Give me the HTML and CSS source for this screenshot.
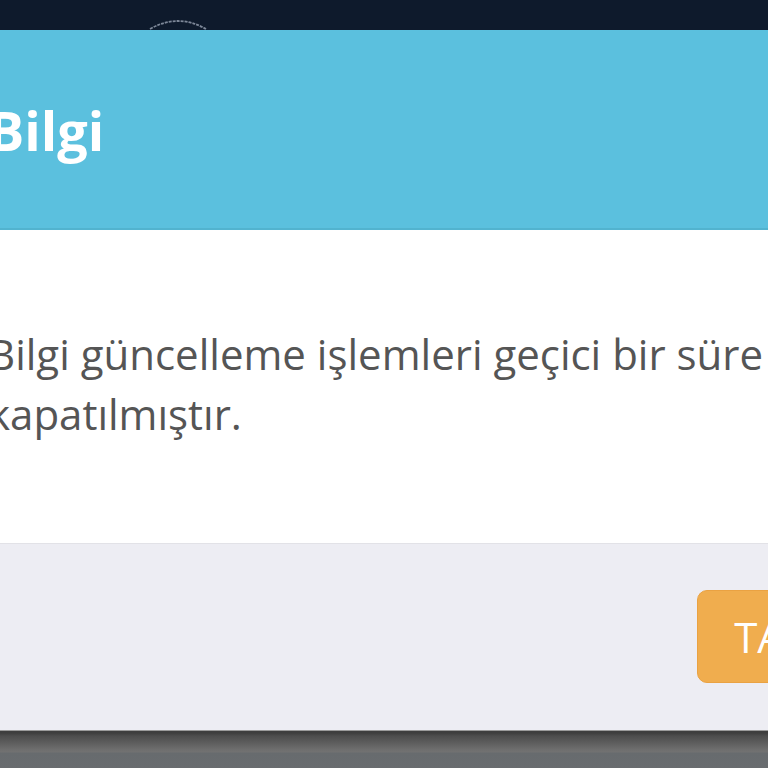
FILE: index.html
```html
<!DOCTYPE html>
<html lang="tr">
<head>
<meta charset="utf-8">
<title>Bilgi</title>
<link rel="stylesheet" href="styles.css">
</head>
<body>
<div class="page">
  <div class="topbar">
    <svg class="logo-arc" width="64" height="14" viewBox="0 0 64 14">
      <path d="M4 13 Q32 -3 60 13" fill="none" stroke="#7d8798" stroke-width="1.8" stroke-dasharray="3 1"/>
    </svg>
  </div>
  <div class="modal">
    <div class="modal-header">
      <h4 class="modal-title">Bilgi</h4>
    </div>
    <div class="modal-body">
      <p class="message">Bilgi güncelleme işlemleri geçici bir süre kapatılmıştır.</p>
    </div>
    <div class="modal-footer">
      <button class="btn-warning" type="button">TAMAM</button>
    </div>
  </div>
  <div class="bottombar"></div>
</div>
</body>
</html>
```

FILE: styles.css
```css
html, body {
  margin: 0;
  padding: 0;
  background: #0d1829;
}
.page {
  width: 768px;
  height: 768px;
  overflow: hidden;
  display: flex;
  flex-direction: column;
  font-family: "Open Sans", "Liberation Sans", sans-serif;
}
.topbar {
  height: 30px;
  flex: 0 0 30px;
  background: #0e1a2c;
  display: flex;
  align-items: flex-end;
  padding-left: 146px;
  box-sizing: border-box;
}
.logo-arc {
  display: block;
}
.modal {
  flex: 0 0 700px;
  width: 995px;
  margin-left: -42px;
  display: flex;
  flex-direction: column;
}
.modal-header {
  height: 200px;
  box-sizing: border-box;
  background: #5bc0de;
  border-bottom: 2px solid #52b3cf;
  padding: 0 30px;
  display: flex;
  align-items: center;
}
.modal-title {
  margin: 0;
  color: #ffffff;
  font-size: 54px;
  font-weight: 700;
  line-height: 1.1;
  padding-top: 4px;
}
.modal-body {
  height: 313px;
  box-sizing: border-box;
  background: #ffffff;
  padding: 94px 30px 0;
}
.message {
  margin: 0;
  color: #555555;
  font-size: 42px;
  line-height: 60px;
}
.modal-footer {
  flex: 1;
  box-sizing: border-box;
  background: #ededf3;
  border-top: 1px solid #e2e2e7;
  padding: 46px 30px 0;
  display: flex;
  justify-content: flex-end;
  align-items: flex-start;
}
.btn-warning {
  height: 93px;
  padding: 0 36px;
  background: #f0ad4e;
  border: 1px solid #eaa242;
  border-radius: 10px;
  color: #ffffff;
  font-family: "Open Sans", "Liberation Sans", sans-serif;
  font-size: 42px;
  line-height: 1;
}
.bottombar {
  flex: 1;
  background: linear-gradient(to bottom, #9b9b9b 0, #9b9b9b 1px, #3e3e3e 1px, #3e3e3e 3px, #4d4d4d 6px, #6f6f6f 20px, #727272 22px, #676b6e 23px, #696c6f 100%);
}
```
